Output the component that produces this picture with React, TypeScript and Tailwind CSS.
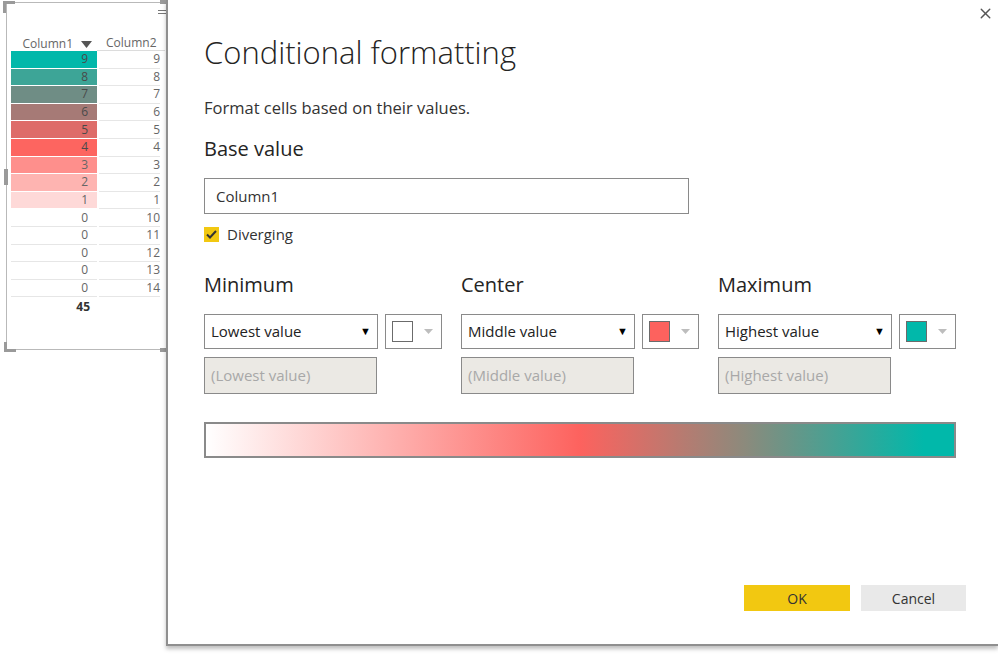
import { X } from "lucide-react";

const rows = [
  { a: 9, b: 9, color: "#01b8aa" },
  { a: 8, b: 8, color: "#3da597" },
  { a: 7, b: 7, color: "#6f8d85" },
  { a: 6, b: 6, color: "#a67a76" },
  { a: 5, b: 5, color: "#de6c69" },
  { a: 4, b: 4, color: "#fd6560" },
  { a: 3, b: 3, color: "#fe8f8c" },
  { a: 2, b: 2, color: "#feb4b1" },
  { a: 1, b: 1, color: "#fed9d8" },
  { a: 0, b: 10, color: "" },
  { a: 0, b: 11, color: "" },
  { a: 0, b: 12, color: "" },
  { a: 0, b: 13, color: "" },
  { a: 0, b: 14, color: "" },
];

const font = { fontFamily: '"Open Sans", "Noto Sans", sans-serif' };

function TableVisual() {
  return (
    <div className="relative h-[657px] w-[166px] shrink-0 overflow-hidden bg-white">
      {/* visual frame */}
      <div className="absolute left-[6px] top-[2px] h-[348px] w-[200px] border-l border-t border-b border-[#b9b9b9]" />
      {/* focus handles */}
      <div className="absolute left-[3px] top-[1px] h-[3px] w-[12px] bg-[#9a9a9a]" />
      <div className="absolute left-[3px] top-[1px] h-[12px] w-[3px] bg-[#9a9a9a]" />
      <div className="absolute left-[4px] top-[169px] h-[16px] w-[4px] bg-[#9a9a9a]" />
      <div className="absolute left-[4px] top-[342px] h-[10px] w-[3px] bg-[#9a9a9a]" />
      <div className="absolute left-[4px] top-[349px] h-[3px] w-[12px] bg-[#9a9a9a]" />
      <div className="absolute left-[160px] top-[348px] h-[4px] w-[8px] bg-[#9a9a9a]" />
      <div className="absolute left-[160px] top-[0px] h-[4px] w-[8px] bg-[#9a9a9a]" />
      <div className="absolute left-[158px] top-[10px] flex w-[10px] flex-col gap-[2px]">
        <div className="h-px w-full bg-[#777]" />
        <div className="h-px w-full bg-[#777]" />
      </div>

      <div className="relative pl-[11px] pt-[36px] text-[12px] text-[#666]" style={font}>
        <div className="flex h-[15px] items-end leading-none">
          <div className="flex w-[86px] items-center justify-end gap-[8px] pr-[5px]">
            <span className="pb-[1px]">Column1</span>
            <svg width="11" height="7" viewBox="0 0 11 7">
              <path d="M0 0 H11 L5.5 7 Z" fill="#555" />
            </svg>
          </div>
          <div className="w-[68px] border-b border-[#dcdcdc] pb-[1px] pl-[9px]">Column2</div>
        </div>
        {rows.map((r, i) => (
          <div key={i} className="flex h-[17.6px] leading-none">
            <div
              className="flex w-[86px] items-center justify-end border-b border-[#e6e6e6] pr-[9px]"
              style={r.color ? { backgroundColor: r.color, borderColor: "#fff" } : undefined}
            >
              <span className={r.color && i < 6 ? "text-[#4a4a4a]" : ""}>{r.a}</span>
            </div>
            <div className="ml-[2px] flex w-[61px] items-center justify-end border-b border-[#e6e6e6]">
              {r.b}
            </div>
          </div>
        ))}
        <div className="flex h-[20px] w-[86px] items-center justify-end pr-[7px] font-bold text-[#333]">45</div>
      </div>
    </div>
  );
}

function Dropdown({ label }: { label: string }) {
  return (
    <div className="flex h-[35px] w-[174px] items-center justify-between border border-[#8a8a8a] bg-white pl-[6px] pr-[6px] text-[15px] text-[#222]">
      <span>{label}</span>
      <span className="text-[11px] text-black">▼</span>
    </div>
  );
}

function ColorPick({ color }: { color: string }) {
  return (
    <div className="flex h-[35px] w-[57px] items-center gap-[11px] border border-[#8a8a8a] bg-white pl-[6px]">
      <div className="h-[21px] w-[21px] border border-[#6b6b6b]" style={{ backgroundColor: color }} />
      <svg width="9" height="5" viewBox="0 0 9 5">
        <path d="M0 0 H9 L4.5 5 Z" fill="#bdbdbd" />
      </svg>
    </div>
  );
}

function Group({ title, sel, ph, color }: { title: string; sel: string; ph: string; color: string }) {
  return (
    <div className="flex flex-col">
      <div className="text-[20px] leading-[26px] text-[#252423]">{title}</div>
      <div className="mt-[16px] flex gap-[7px]">
        <Dropdown label={sel} />
        <ColorPick color={color} />
      </div>
      <div className="mt-[8px] flex h-[37px] w-[173px] items-center border border-[#8a8a8a] bg-[#ebe9e4] pl-[6px] text-[15px] text-[#a8a8a8]">
        {ph}
      </div>
    </div>
  );
}

function Dialog() {
  return (
    <div className="relative h-[646px] flex-1 border-b-2 border-l-2 border-[#8f8f8f] bg-white pl-[36px] shadow-[0_3px_4px_rgba(0,0,0,0.25)]" style={font}>
      <button className="absolute right-[4px] top-[5px] text-[#555]">
        <X size={17} strokeWidth={2} />
      </button>
      <div className="pt-[32px] text-[31px] font-light leading-[40px] text-[#252423]">Conditional formatting</div>
      <div className="mt-[25px] text-[16.5px] leading-[22px] text-[#333]">Format cells based on their values.</div>
      <div className="mt-[17px] text-[20px] leading-[26px] text-[#252423]">Base value</div>
      <div className="mt-[16px] flex h-[36px] w-[485px] items-center border border-[#8a8a8a] pl-[11px] text-[15px] text-[#333]">
        Column1
      </div>
      <div className="mt-[12px] flex h-[17px] items-center gap-[8px]">
        <div className="flex h-[15px] w-[15px] items-center justify-center bg-[#f2c811]">
          <svg width="11" height="9" viewBox="0 0 11 9">
            <path d="M1 4.5 L4 7.5 L10 1" fill="none" stroke="#333" strokeWidth="2" />
          </svg>
        </div>
        <span className="text-[15px] leading-[17px] text-[#333]">Diverging</span>
      </div>
      <div className="mt-[29px] grid grid-cols-[238px_238px_238px] gap-[19px]">
        <Group title="Minimum" sel="Lowest value" ph="(Lowest value)" color="#ffffff" />
        <Group title="Center" sel="Middle value" ph="(Middle value)" color="#fd625e" />
        <Group title="Maximum" sel="Highest value" ph="(Highest value)" color="#01b8aa" />
      </div>
      <div className="mt-[28px] h-[36px] w-[752px] border-2 border-[#8a8a8a] bg-[linear-gradient(to_right,#ffffff_0%,#fd625e_50%,#8c8a7c_72%,#01b8aa_96%,#01b8aa_100%)]" />
      <div className="absolute bottom-[33px] right-[32px] flex gap-[11px] text-[14px]">
        <button className="h-[26px] w-[106px] bg-[#f2c811] text-[#333]">OK</button>
        <button className="h-[26px] w-[105px] bg-[#e9e9e9] text-[#333]">Cancel</button>
      </div>
    </div>
  );
}

export default function App() {
  return (
    <div className="flex h-[657px] w-[998px] overflow-hidden bg-white">
      <TableVisual />
      <Dialog />
    </div>
  );
}
